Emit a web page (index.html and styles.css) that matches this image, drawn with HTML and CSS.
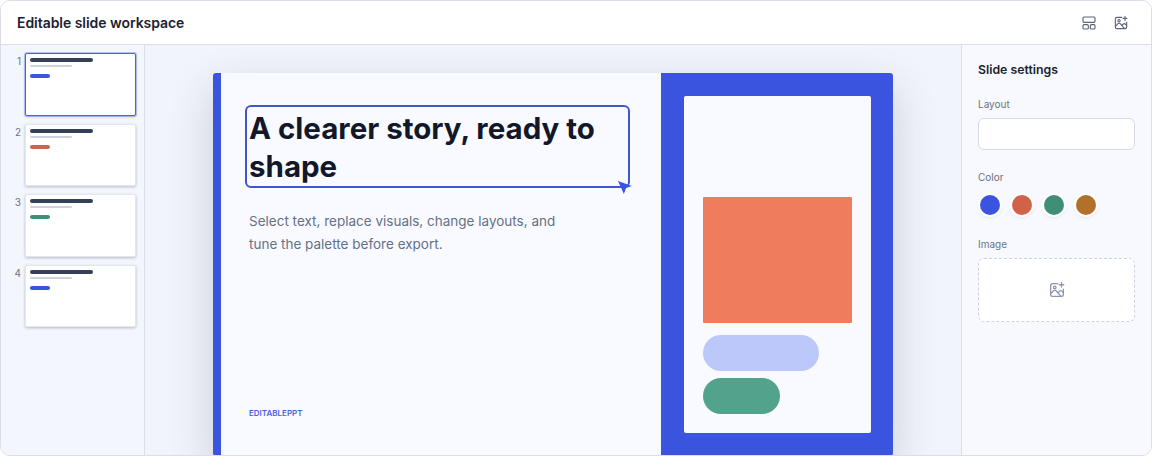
FILE: index.html
```html
<!DOCTYPE html>
<html lang="en">
<head>
<meta charset="utf-8">
<title>Editable slide workspace</title>
<link rel="stylesheet" href="styles.css">
</head>
<body>
<div class="app">
  <header class="topbar">
    <h1 class="app-title">Editable slide workspace</h1>
    <div class="tools">
      <svg class="icon" viewBox="0 0 24 24"><rect x="3" y="3" width="18" height="8" rx="1.5"/><rect x="3" y="14.5" width="8" height="6.5" rx="1.5"/><rect x="14" y="14.5" width="7" height="6.5" rx="1.5"/></svg>
      <svg class="icon" viewBox="0 0 24 24"><path d="M13 3.500H6a2.500 2.500 0 0 0-2.500 2.500v12A2.500 2.500 0 0 0 6 20.500h12a2.500 2.500 0 0 0 2.500-2.500v-7"/><path d="M3.500 17l4-4c1-1 2.300-1 3.300 0l6.700 7.500"/><path d="M14 15l1.500-1.500c.8-.8 2-.8 2.800 0l2.200 2.200"/><circle cx="9" cy="8.500" r="1.700"/><path d="M18 2v6M15 5h6"/></svg>
    </div>
  </header>
  <div class="body">
    <aside class="rail">
      <div class="thumb-row"><span class="num">1</span><div class="thumb active"><i class="t1"></i><i class="t2"></i><i class="t3 blue"></i></div></div>
      <div class="thumb-row"><span class="num">2</span><div class="thumb"><i class="t1"></i><i class="t2"></i><i class="t3 red"></i></div></div>
      <div class="thumb-row"><span class="num">3</span><div class="thumb"><i class="t1"></i><i class="t2"></i><i class="t3 green"></i></div></div>
      <div class="thumb-row"><span class="num">4</span><div class="thumb"><i class="t1"></i><i class="t2"></i><i class="t3 blue"></i></div></div>
    </aside>
    <main class="canvas">
      <section class="slide">
        <div class="slide-main">
          <div class="headline-box">
            <h2 class="headline">A clearer story, ready to shape</h2>
            <svg class="handle" viewBox="0 0 14 14"><path d="M0 1 L13 5.500 L7.500 7.500 L5.500 13 Z"/></svg>
          </div>
          <p class="lede">Select text, replace visuals, change layouts, and tune the palette before export.</p>
          <div class="brand">EDITABLEPPT</div>
        </div>
        <div class="slide-side">
          <div class="side-card">
            <div class="visual"></div>
            <div class="pill pill-a"></div>
            <div class="pill pill-b"></div>
          </div>
        </div>
      </section>
    </main>
    <aside class="settings">
      <h3 class="settings-title">Slide settings</h3>
      <div class="label">Layout</div>
      <div class="select"></div>
      <div class="label">Color</div>
      <div class="swatches">
        <span class="swatch blue"></span>
        <span class="swatch red"></span>
        <span class="swatch green"></span>
        <span class="swatch amber"></span>
      </div>
      <div class="label">Image</div>
      <div class="drop">
        <svg class="icon drop-icon" viewBox="0 0 24 24"><path d="M13 3.500H6a2.500 2.500 0 0 0-2.500 2.500v12A2.500 2.500 0 0 0 6 20.500h12a2.500 2.500 0 0 0 2.500-2.500v-7"/><path d="M3.500 17l4-4c1-1 2.300-1 3.300 0l6.700 7.500"/><path d="M14 15l1.500-1.500c.8-.8 2-.8 2.800 0l2.200 2.200"/><circle cx="9" cy="8.500" r="1.700"/><path d="M18 2v6M15 5h6"/></svg>
      </div>
    </aside>
  </div>
</div>
</body>
</html>
```
FILE: styles.css
```css
* { box-sizing: border-box; }
html, body { margin: 0; height: 100%; }
body { font-family: "Inter", "Liberation Sans", sans-serif; color: #171c2b; background: #fff; overflow: hidden; }
.app { width: 1152px; height: 456px; border: 1px solid #d9dee7; border-radius: 10px; overflow: hidden; display: flex; flex-direction: column; background: #fff; }
.topbar { height: 44px; flex: none; display: flex; align-items: center; justify-content: space-between; padding: 0 22px 0 16px; background: #fff; border-bottom: 1px solid #d9dee7; }
.app-title { margin: 0; font-size: 14px; font-weight: 600; color: #1c2230; letter-spacing: -.05px; }
.tools { display: flex; gap: 16px; align-items: center; }
.icon { width: 16px; height: 16px; fill: none; stroke: #5d6678; stroke-width: 1.700; stroke-linecap: round; stroke-linejoin: round; display: block; }
.body { flex: 1; min-height: 0; display: flex; }
.rail { width: 144px; flex: none; background: #f3f6fc; border-right: 1px solid #d9dee7; padding: 8px 8px 0 0; display: flex; flex-direction: column; gap: 8px; }
.thumb-row { display: flex; gap: 4px; align-items: flex-start; }
.num { width: 20px; text-align: right; font-size: 10px; line-height: 12px; padding-top: 2px; color: #6b7384; }
.thumb { width: 111px; height: 62.500px; background: #fff; border: 1px solid #e3e7ee; border-radius: 2px; box-shadow: 0 1px 3px rgba(30,40,70,.28); padding: 4px 4px 0; display: flex; flex-direction: column; align-items: flex-start; }
.thumb.active { border: 1px solid #4a62de; box-shadow: 0 0 0 1px rgba(59,84,224,.3), 0 1px 3px rgba(30,40,70,.2); }
.thumb i { display: block; border-radius: 2px; }
.t1 { width: 63px; height: 4px; background: #354058; }
.t2 { width: 42px; height: 2px; margin-top: 3px; background: #cdd2dc; }
.t3 { width: 20px; height: 4px; margin-top: 7px; }
.blue { background: #3b54e0; }
.red { background: #d1624a; }
.green { background: #3f8f76; }
.amber { background: #b3702a; }
.canvas { width: 816px; flex: none; background: #f1f4fa; padding: 28px 68px 0; }
.slide { width: 680px; height: 382.500px; display: flex; background: #f9faff; border-left: 8px solid #3b54e0; border-radius: 3px; box-shadow: 0 16px 44px rgba(40,52,90,.2); overflow: hidden; }
.slide-main { width: 440px; flex: none; padding: 32px 32px 38px 24px; display: flex; flex-direction: column; }
.headline-box { position: relative; width: 385px; height: 83px; border: 2px solid #3f56cf; border-radius: 6px; padding: 2px; flex: none; }
.headline { margin: 0; font-size: 29.500px; line-height: 38px; font-weight: 700; color: #121829; }
.handle { position: absolute; right: -5px; bottom: -9px; width: 15px; height: 15px; fill: #3b54e0; }
.lede { margin: 22px 0 0 4px; width: 320px; font-size: 13.500px; line-height: 23px; color: #667085; }
.brand { margin: auto 0 0 4px; font-size: 8px; line-height: 10px; font-weight: 600; color: #4a62d8; }
.slide-side { flex: 1; background: #3b54e0; padding: 23px; display: flex; }
.side-card { flex: 1; background: #f9faff; border-radius: 2px; padding: 101px 19px 0; display: flex; flex-direction: column; align-items: flex-start; }
.visual { width: 148.500px; height: 126px; background: #f07c5e; border-radius: 1px; }
.pill { border-radius: 18px; height: 36px; }
.pill-a { width: 115.500px; margin-top: 11.500px; background: #bcc7fa; }
.pill-b { width: 77px; margin-top: 7.500px; background: #53a38c; }
.settings { width: 190px; flex: none; background: #f7f9fe; border-left: 1px solid #d9dee7; padding: 16px 16px 0 16px; }
.settings-title { margin: 0 0 19px; font-size: 12.300px; line-height: 18px; font-weight: 600; color: #1c2230; }
.label { font-size: 10px; line-height: 13px; color: #6b7384; }
.select { width: 157px; height: 32px; margin: 7px 0 21px; background: #fff; border: 1px solid #d5dae4; border-radius: 6px; }
.swatches { display: flex; gap: 12px; margin: 11px 0 23px 2px; }
.swatch { width: 20px; height: 20px; border-radius: 50%; box-shadow: 0 0 0 2px #fff, 0 2px 4px rgba(40,50,80,.15); }
.drop { width: 157px; height: 64px; margin-top: 7px; background: #fff; border: 1px dashed #ccd2de; border-radius: 6px; display: flex; align-items: center; justify-content: center; }
.drop-icon { stroke: #8d96aa; width: 18px; height: 18px; }
```
